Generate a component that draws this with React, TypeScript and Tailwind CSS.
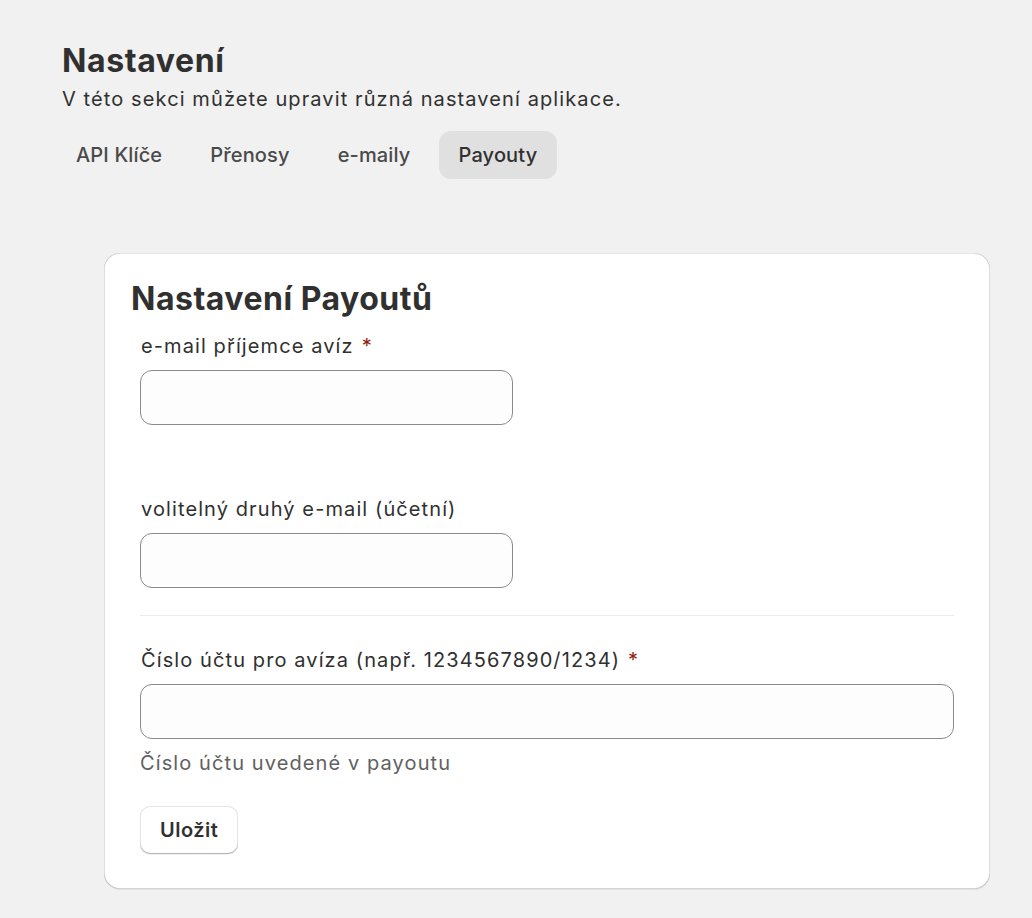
import { useState } from 'react'

const tabs = ['API Klíče', 'Přenosy', 'e-maily', 'Payouty']

function Field({
  label,
  required,
  help,
  wide,
}: {
  label: string
  required?: boolean
  help?: string
  wide?: boolean
}) {
  return (
    <div className="flex flex-col">
      <label className="pb-[9px] pl-px text-[20px] leading-[30px] tracking-[1.1px] text-[#303030]">
        {label}
        {required && <span className="ml-2 text-[#8e1f0b]">*</span>}
      </label>
      <input
        className={`h-[55px] rounded-[12px] border border-[#8a8a8a] bg-[#fdfdfd] px-4 text-[20px] outline-none ${
          wide ? 'w-full' : 'w-[373px]'
        }`}
      />
      {help && <p className="mt-[9px] text-[20px] leading-[30px] tracking-[1.1px] text-[#616161]">{help}</p>}
    </div>
  )
}

export default function App() {
  const [active, setActive] = useState('Payouty')

  return (
    <div
      className="min-h-[918px] bg-[#f1f1f1] pt-[41px] text-[#303030]"
      style={{ fontFamily: 'Inter, "Noto Sans", sans-serif' }}
    >
      <div className="pl-[62px]">
        <h1 className="text-[32px] font-bold leading-[40px] tracking-[0.6px]">Nastavení</h1>
        <p className="mt-[3px] text-[20px] leading-[30px] tracking-[1.1px]">
          V této sekci můžete upravit různá nastavení aplikace.
        </p>
      </div>

      <nav className="mt-[17px] flex gap-[8px] pl-[56px]">
        {tabs.map((t) => (
          <button
            key={t}
            onClick={() => setActive(t)}
            className={`h-[48px] rounded-[12px] px-5 text-[20px] font-medium tracking-[0.15px] ${
              active === t ? 'bg-[#e0e0e0] text-[#303030]' : 'text-[#4a4a4a]'
            }`}
          >
            {t}
          </button>
        ))}
      </nav>

      <div className="ml-[104px] mr-[42px] mt-[74px] rounded-[16px] bg-white pb-[35px] pl-[27px] pr-[36px] pt-[26px] shadow-[0_1px_0_0_rgba(26,26,26,0.07),inset_0_-1px_0_0_rgba(0,0,0,0.17),inset_1px_0_0_0_rgba(0,0,0,0.13),inset_-1px_0_0_0_rgba(0,0,0,0.13),inset_0_1px_0_0_rgba(204,204,204,0.5)]">
        <h2 className="text-[32px] font-bold leading-[40px] tracking-[0.5px]">Nastavení Payoutů</h2>

        <div className="mt-[12px] pl-[9px]">
          <Field label="e-mail příjemce avíz" required />
          <div className="mt-[69px]">
            <Field label="volitelný druhý e-mail (účetní)" />
          </div>
          <div className="mb-[29px] mt-[27px] border-t border-[#ebebeb]" />
          <Field
            label="Číslo účtu pro avíza (např. 1234567890/1234)"
            required
            help="Číslo účtu uvedené v payoutu"
            wide
          />

          <button className="mt-[28px] h-[48px] rounded-[10px] bg-white px-5 text-[20px] font-semibold tracking-[0.5px] text-[#303030] shadow-[inset_0_-1px_0_0_#b5b5b5,inset_0_0_0_1px_#e3e3e3,0_1px_0_0_rgba(0,0,0,0.05)]">
            Uložit
          </button>
        </div>
      </div>
    </div>
  )
}
